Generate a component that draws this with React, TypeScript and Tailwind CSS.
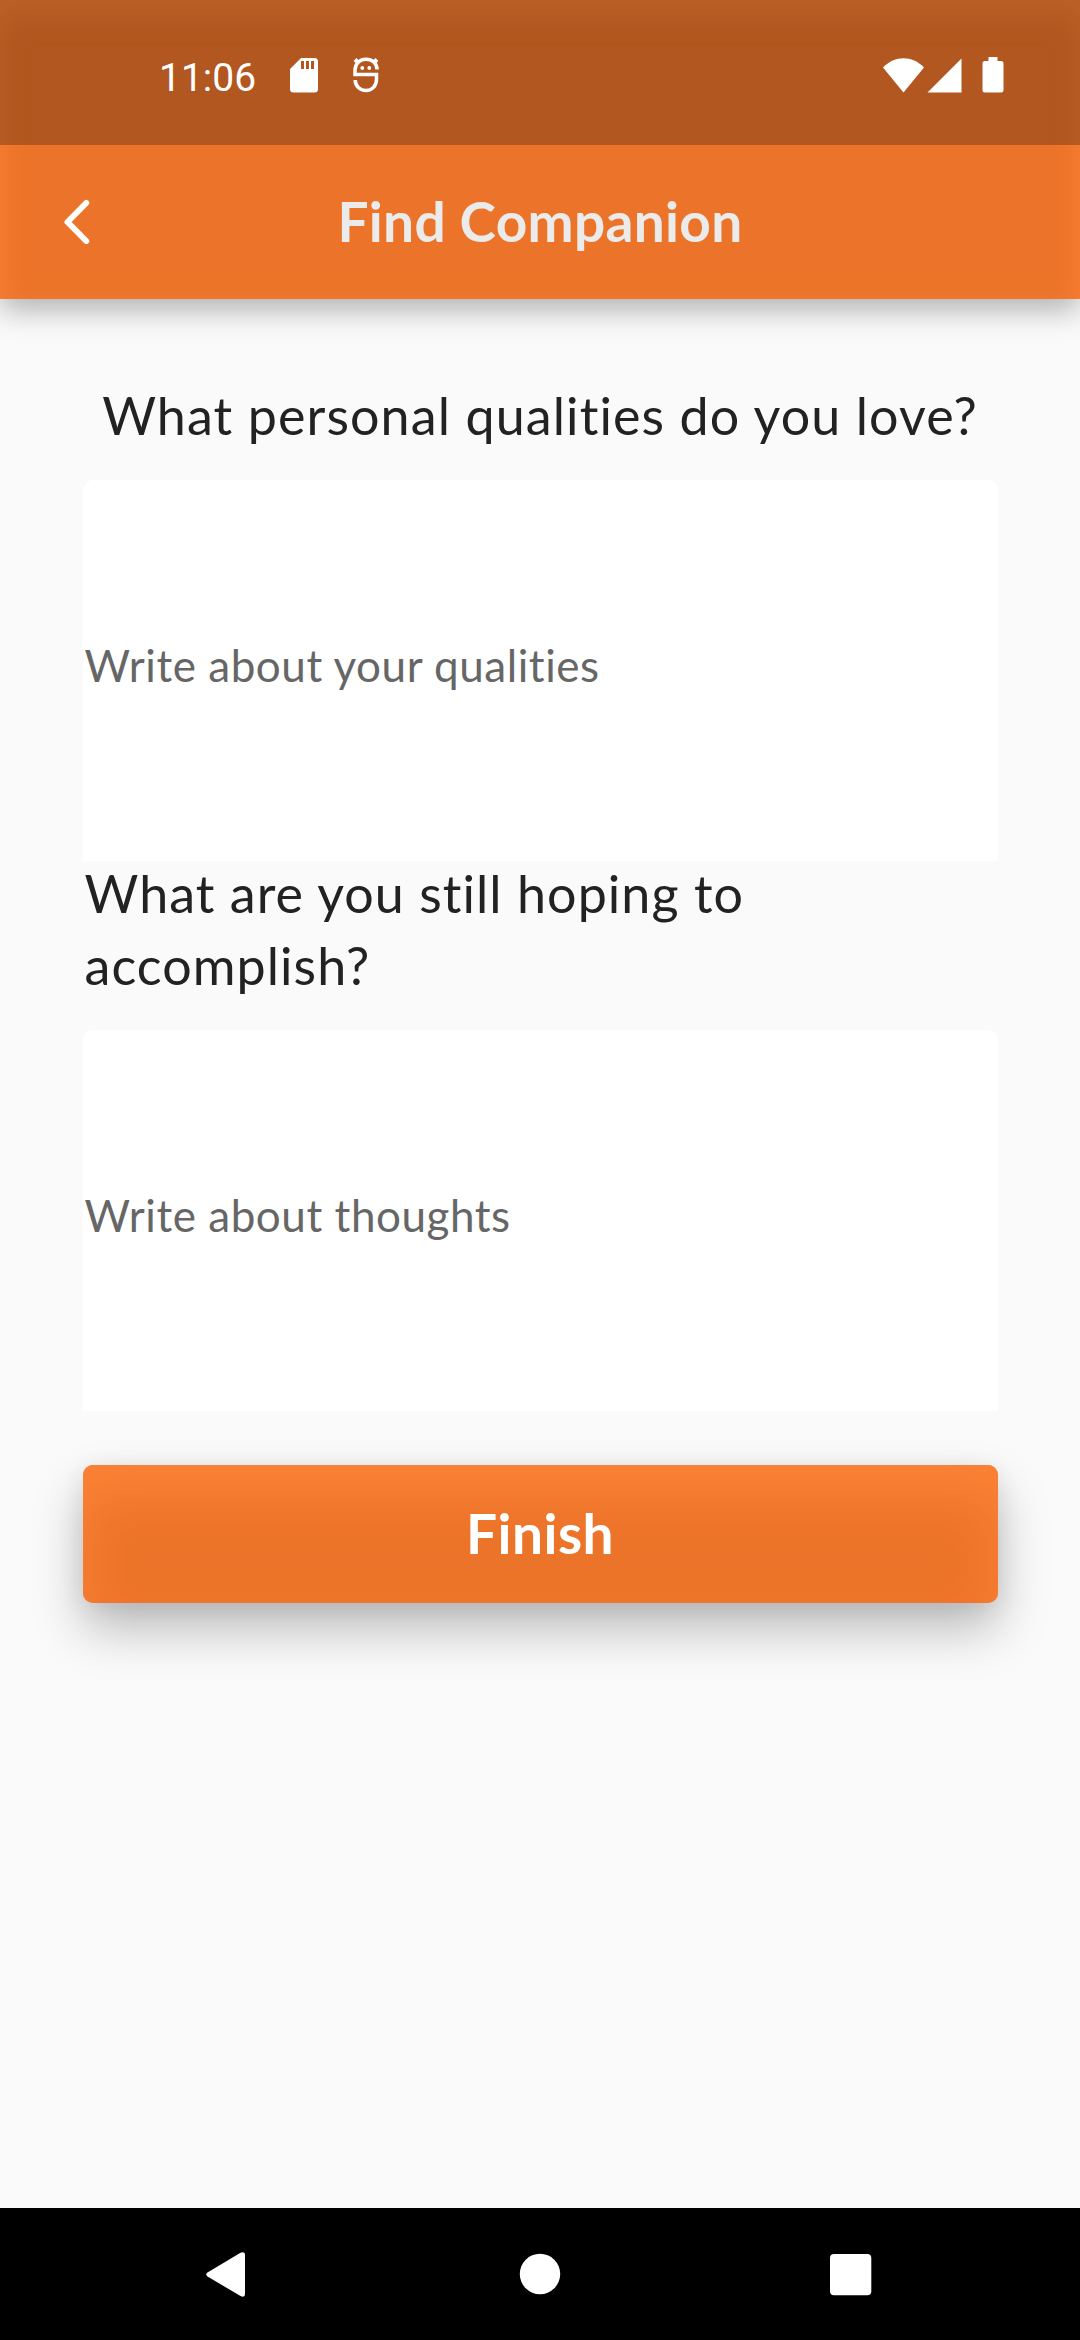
import React, { useState } from "react";

function StatusBar() {
  return (
    <div className="flex h-[145px] items-center bg-black/25 pl-[159px] pr-[76px] pt-[5px]">
      <span className="w-[131px] pt-[6px] font-['Roboto',sans-serif] text-[39px] leading-none text-white">
        11:06
      </span>
      <svg width="28" height="35" viewBox="0 0 28 35" className="fill-white">
        <path
          fillRule="evenodd"
          d="M11 0H24.5Q28 0 28 3.5V31Q28 34.500 24.500 34.500H3.500Q0 34.500 0 31V11ZM11 3V11H14V3ZM16 3V11H19V3ZM21 3V11H24V3Z"
        />
      </svg>
      <svg
        width="26"
        height="36"
        viewBox="0 0 26 36"
        className="ml-[35px] fill-none stroke-white"
        strokeWidth="3.500"
      >
        <path d="M24 12.500C24 6 19 2.200 13 2.200S2 6.500 2 13V17.500H23.500V22C23.500 29 19 33.500 13 33.500S2.200 29 2.200 23" />
        <path d="M2 2.500L5 5.500M24 2.500L21 5.500" strokeWidth="4" />
        <circle cx="9.300" cy="11" r="1.900" className="fill-white stroke-none" />
        <circle cx="16.300" cy="11" r="1.900" className="fill-white stroke-none" />
      </svg>
      <svg width="41" height="35" viewBox="0 0 41 35" className="ml-auto fill-white">
        <path d="M20.500 34.500L0 9.500C12 -2.800 29 -2.800 41 9.500Z" />
      </svg>
      <svg width="35" height="35" viewBox="0 0 35 35" className="ml-[3px] fill-white">
        <path d="M0.500 34.500H34.500V0.500Z" />
      </svg>
      <svg width="22" height="36" viewBox="0 0 22 36" className="ml-5 fill-white">
        <path d="M6.500 0H15.500V4H19Q21.500 4 21.500 6.500V33Q21.500 35.500 19 35.500H3Q0.500 35.500 0.500 33V6.500Q0.500 4 3 4H6.500Z" />
      </svg>
    </div>
  );
}

function Header() {
  return (
    <header className="h-[299px] bg-[#ec742a] shadow-[inset_0_14px_28px_#fb8236,0_11px_28px_rgba(0,0,0,0.29)]">
      <StatusBar />
      <div className="flex h-[154px] items-center">
        <button className="flex h-full w-[154px] items-center pl-[62px]">
          <svg
            width="30"
            height="48"
            viewBox="0 0 30 48"
            className="fill-none stroke-white"
            strokeWidth="6"
            strokeLinecap="round"
            strokeLinejoin="round"
          >
            <path d="M24.200 5L5.500 24L24.200 43" />
          </svg>
        </button>
        <h1 className="flex-1 whitespace-nowrap pb-[2px] text-center text-[55px] font-bold leading-none tracking-[0.3px] text-[#ebebeb]">
          Find Companion
        </h1>
        <div className="w-[154px]" />
      </div>
    </header>
  );
}

function AnswerBox({ value, onChange, placeholder }) {
  return (
    <input
      type="text"
      value={value}
      onChange={(e) => onChange(e.target.value)}
      placeholder={placeholder}
      className="block h-[381px] w-full rounded-t-[10px] bg-white pb-[12px] pl-[2px] text-[44px] tracking-[0.55px] text-[#222] outline-none placeholder:text-[#666]"
    />
  );
}

function NavBar() {
  return (
    <nav className="flex h-[132px] items-center bg-black">
      <svg width="1080" height="132" viewBox="0 0 1080 132" className="fill-white">
        <path d="M207.500 64.500L240.500 44.700Q245 43 245 47V86Q245 90 240.500 88L207.500 68.500Q205 66.500 207.500 64.500Z" />
        <circle cx="540" cy="66" r="20.200" />
        <rect x="830" y="46" width="41.300" height="41.300" rx="4" />
      </svg>
    </nav>
  );
}

export default function App() {
  const [qualities, setQualities] = useState("");
  const [thoughts, setThoughts] = useState("");

  return (
    <div className="flex h-[2340px] w-[1080px] flex-col bg-[#fafafa] font-['Lato',sans-serif]">
      <Header />
      <main className="flex-1 px-[82.5px] pt-[80px]">
        <p className="h-[101px] whitespace-nowrap text-center text-[52px] leading-[72px] tracking-[1.1px] text-[#222]">
          What personal qualities do you love?
        </p>
        <AnswerBox
          value={qualities}
          onChange={setQualities}
          placeholder="Write about your qualities"
        />
        <p className="-mt-[4px] h-[173px] pl-[2px] text-[52px] leading-[72px] tracking-[1.05px] text-[#222]">
          What are you still hoping to
          <br />
          accomplish?
        </p>
        <AnswerBox
          value={thoughts}
          onChange={setThoughts}
          placeholder="Write about thoughts"
        />
        <button className="mt-[54px] flex h-[137.5px] w-full items-center justify-center rounded-[10px] bg-[#ec742a] text-[55px] font-bold leading-none tracking-[0.5px] text-white shadow-[inset_0_30px_50px_#fb8236,0_26px_50px_rgba(0,0,0,0.25),0_4px_24px_rgba(0,0,0,0.08)]">
          Finish
        </button>
      </main>
      <NavBar />
    </div>
  );
}
